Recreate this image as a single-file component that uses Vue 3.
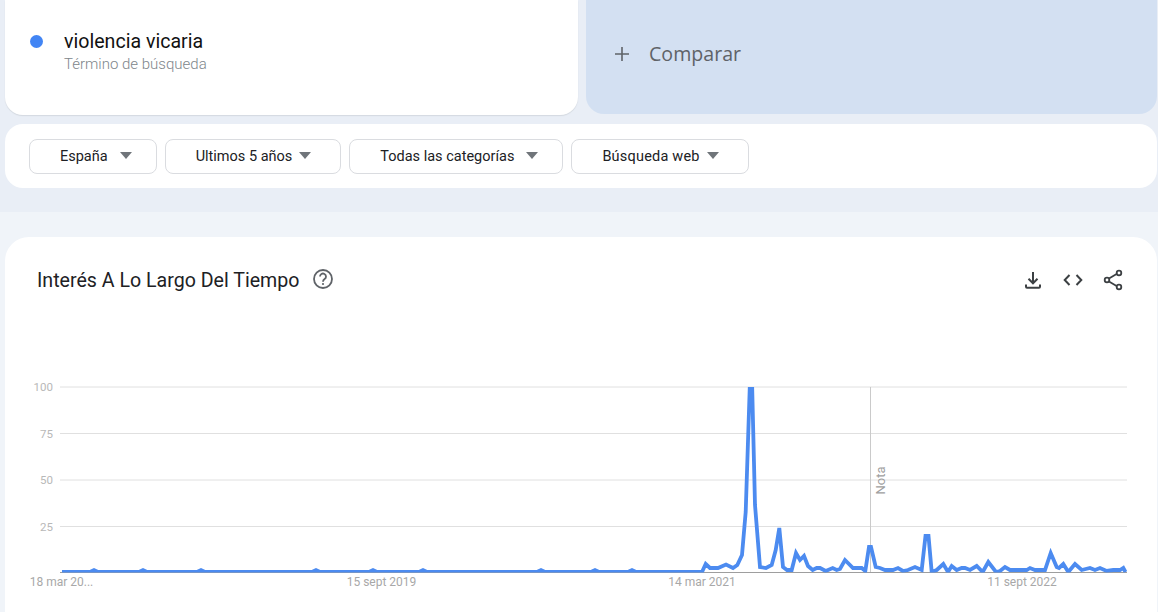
<script setup>
const chips = [
  { label: 'España', tight: false, wide: false },
  { label: 'Ultimos 5 años', tight: true, wide: false },
  { label: 'Todas las categorías', tight: false, wide: false },
  { label: 'Búsqueda web', tight: true, wide: true },
]
const grid = [
  { y: 387, label: '100' },
  { y: 433.5, label: '75' },
  { y: 480, label: '50' },
  { y: 526.5, label: '25' },
]
const xLabels = [
  { x: 61.5, label: '18 mar 20...' },
  { x: 381.5, label: '15 sept 2019' },
  { x: 702, label: '14 mar 2021' },
  { x: 1022, label: '11 sept 2022' },
]
const flat = [[62, 572]]
for (const x of [94, 143, 201, 316, 373, 423, 541, 595, 632]) {
  flat.push([x - 4, 572], [x, 570], [x + 4, 572])
}
const active = [
  [702, 572], [705.7, 564], [710, 568], [718, 568], [726, 564.5], [733, 568], [737.3, 565], [742, 555],
  [745.7, 512], [750, 380], [752, 380], [755, 505], [760, 567], [766, 568], [771.7, 565], [775.7, 550],
  [779.3, 528], [783, 567], [787, 570], [791.7, 570], [796, 553], [800, 560], [804, 556], [808, 566],
  [812.7, 570], [816.7, 568], [820, 568], [825.7, 571], [832.7, 568], [836.7, 570], [840, 569], [845, 560],
  [853, 568], [861.7, 568], [865.3, 571], [869, 547], [871, 547], [875.7, 567], [880, 568], [885, 570],
  [893, 570], [898, 568], [903, 571], [908, 570], [915, 567], [921.7, 570], [925.5, 536], [928.5, 536],
  [931.7, 572], [936.7, 570], [943.3, 564], [948, 572], [951.7, 566], [956.7, 570], [961.7, 568], [965, 568],
  [970, 570], [976.7, 566], [982.7, 572], [988.3, 562], [996, 572], [1000, 571], [1005, 567], [1010, 570],
  [1026.7, 570], [1030, 568], [1035, 570], [1045, 570], [1050.7, 553], [1056.7, 567], [1059, 568], [1063.3, 564],
  [1068.3, 572], [1075, 564], [1081.7, 570], [1090, 568], [1095, 570], [1100, 568], [1106.7, 571], [1113.3, 570],
  [1120, 570], [1123.3, 568], [1125.5, 572],
]
const linePoints = [...flat, ...active].map((p) => p.join(',')).join(' ')
</script>

<template>
  <div class="page">
    <section class="top">
      <div class="terms">
        <div class="term">
          <span class="dot"></span>
          <div class="term-text">
            <div class="term-name">violencia vicaria</div>
            <div class="term-type">Término de búsqueda</div>
          </div>
        </div>
        <div class="compare">
          <svg class="plus" width="16" height="16" viewBox="0 0 16 16">
            <path d="M8 1v14M1 8h14" stroke="#5f6368" stroke-width="1.6" fill="none" />
          </svg>
          <span>Comparar</span>
        </div>
      </div>
      <div class="filters">
        <div v-for="c in chips" :key="c.label" class="chip" :class="{ tight: c.tight, wide: c.wide }">
          <span>{{ c.label }}</span>
          <i class="caret"></i>
        </div>
      </div>
    </section>
    <section class="lower">
      <div class="card">
        <header class="head">
          <h2 class="title">Interés A Lo Largo Del Tiempo</h2>
          <svg class="help" width="24" height="24" viewBox="0 0 24 24">
            <circle cx="12" cy="12" r="9" fill="none" stroke="#5f6368" stroke-width="1.8" />
            <path d="M9 9.6a3 3 0 1 1 4.6 2.5c-1 .7-1.6 1.2-1.6 2.6" fill="none" stroke="#5f6368" stroke-width="1.8" />
            <circle cx="12" cy="17" r="1.1" fill="#5f6368" />
          </svg>
          <div class="actions">
            <svg width="24" height="24" viewBox="0 0 24 24">
              <path d="M12 4v11M7.500 10.800 12 15.300l4.500-4.500M5 16.500v2.300c0 .6.4 1 1 1h12c.6 0 1-.4 1-1v-2.300" fill="none" stroke="#3c4043" stroke-width="2" />
            </svg>
            <svg width="24" height="24" viewBox="0 0 24 24">
              <path d="M8.500 7 3.700 12l4.800 5M15.500 7l4.800 5-4.800 5" fill="none" stroke="#3c4043" stroke-width="2" />
            </svg>
            <svg width="24" height="24" viewBox="0 0 24 24">
              <path d="m8 10.500 8-4.700M8 13.500l8 4.700" fill="none" stroke="#3c4043" stroke-width="1.800" />
              <circle cx="6" cy="12" r="2.300" fill="#fff" stroke="#3c4043" stroke-width="1.800" />
              <circle cx="18" cy="5" r="2.300" fill="#fff" stroke="#3c4043" stroke-width="1.800" />
              <circle cx="18" cy="19" r="2.300" fill="#fff" stroke="#3c4043" stroke-width="1.800" />
            </svg>
          </div>
        </header>
        <svg class="chart" width="1152" height="289" viewBox="5 323 1152 289">
          <defs>
            <clipPath id="plot">
              <rect x="60" y="387" width="1067" height="185.500" />
            </clipPath>
          </defs>
          <g v-for="g in grid" :key="g.label">
            <line x1="60" x2="1127" :y1="g.y" :y2="g.y" class="gridline" />
            <text x="53" :y="g.y + 4" text-anchor="end" class="ylabel">{{ g.label }}</text>
          </g>
          <line x1="870.500" x2="870.500" y1="387" y2="572" class="note" />
          <text class="nota" transform="translate(884.500 494.500) rotate(-90)">Nota</text>
          <line x1="60" x2="1127" y1="572.500" y2="572.500" class="axis" />
          <polyline :points="linePoints" class="trend" clip-path="url(#plot)" />
          <text v-for="l in xLabels" :key="l.label" :x="l.x" y="586" text-anchor="middle" class="xlabel">{{ l.label }}</text>
        </svg>
      </div>
    </section>
  </div>
</template>

<style>
html, body { margin: 0; background: #f0f4f9; }
</style>

<style scoped>
.page {
  width: 1158px;
  height: 612px;
  overflow: hidden;
  font-family: Roboto, "Liberation Sans", sans-serif;
}
.top {
  background: #e9eef6;
  height: 212px;
  padding: 0 1px 0 5px;
  box-sizing: border-box;
}
.terms {
  display: grid;
  grid-template-columns: 573px 571px;
  gap: 8px;
  height: 115px;
}
.term {
  background: #fff;
  border-radius: 0 0 18px 18px;
  box-shadow: 0 1px 1px rgba(60, 64, 67, 0.12);
  display: flex;
  align-items: flex-start;
  padding: 30px 0 0 25px;
  box-sizing: border-box;
}
.dot {
  width: 13px;
  height: 13px;
  border-radius: 50%;
  background: #4285f4;
  margin: 5px 21px 0 0;
}
.term-name {
  font-size: 19.600px;
  line-height: 24px;
  color: #111;
}
.term-type {
  font-size: 15px;
  line-height: 20px;
  color: #80868b;
  font-weight: 300;
}
.compare {
  background: #d3e0f2;
  border-radius: 0 0 18px 18px;
  height: 114px;
  display: flex;
  align-items: center;
  gap: 19px;
  padding: 0 0 7px 28px;
  box-sizing: border-box;
  color: #5f6368;
  font-family: "Open Sans", Roboto, sans-serif;
  font-size: 19.600px;
  font-weight: 500;
}
.filters {
  margin-top: 9px;
  height: 64px;
  background: #fff;
  border-radius: 18px;
  display: flex;
  align-items: center;
  gap: 8px;
  padding: 0 24px;
  box-sizing: border-box;
}
.chip {
  height: 35px;
  box-sizing: border-box;
  border: 1px solid #dadce0;
  border-radius: 8px;
  display: flex;
  align-items: center;
  gap: 12px;
  padding: 0 24px 0 30px;
  font-size: 14.500px;
  color: #202124;
  white-space: nowrap;
}
.chip.tight {
  gap: 7px;
  padding-right: 29px;
}
.chip.wide {
  letter-spacing: 0.2px;
}
.caret {
  width: 0;
  height: 0;
  border-left: 6px solid transparent;
  border-right: 6px solid transparent;
  border-top: 7px solid #70757a;
  margin-top: -2px;
}
.lower {
  padding: 25px 1px 0 5px;
}
.card {
  background: #fff;
  border-radius: 24px 24px 0 0;
  height: 375px;
}
.head {
  height: 86px;
  display: flex;
  align-items: center;
  padding: 0 32px 0 32px;
}
.title {
  margin: 0;
  font-size: 19.600px;
  font-weight: 400;
  color: #202124;
}
.help {
  margin-left: 12px;
  margin-top: -2px;
}
.actions {
  margin-left: auto;
  display: flex;
  gap: 16px;
}
.chart {
  display: block;
}
.gridline {
  stroke: #e0e0e0;
  stroke-width: 1;
}
.axis {
  stroke: #9e9e9e;
  stroke-width: 1;
}
.note {
  stroke: #cacaca;
  stroke-width: 1;
}
.trend {
  fill: none;
  stroke: #4c8bf0;
  stroke-width: 3.800;
  stroke-linejoin: miter;
}
.ylabel {
  font-size: 11.500px;
  fill: #b8b8b8;
}
.xlabel {
  font-size: 12px;
  fill: #a8a8a8;
}
.nota {
  font-size: 13px;
  fill: #a0a0a0;
}
</style>
